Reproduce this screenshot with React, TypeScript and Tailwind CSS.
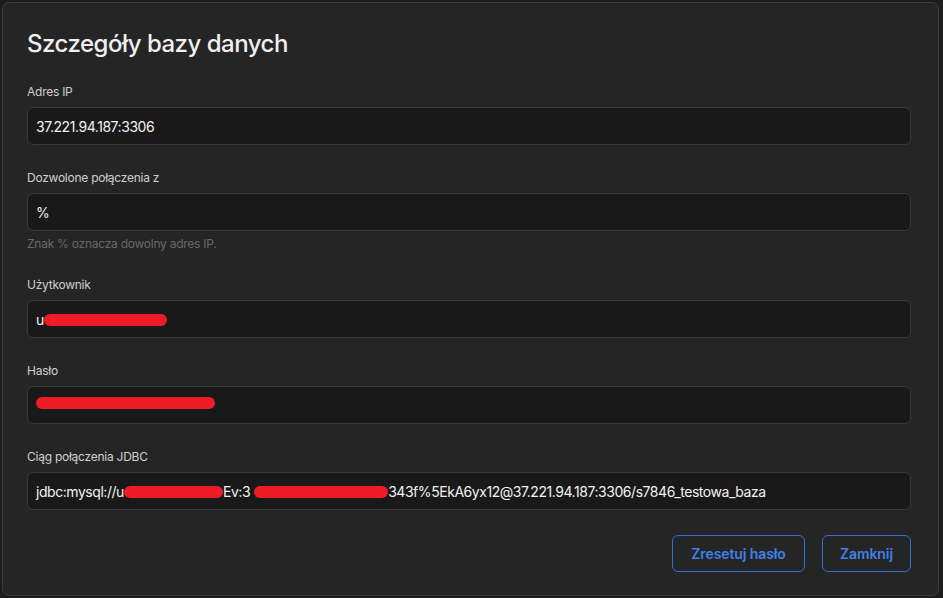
import React from "react";

function Redact({ width, className = "align-[-1px]" }: { width: number; className?: string }) {
  return (
    <span
      className={`inline-block h-[12px] rounded-full bg-[#ee1c25] ${className}`}
      style={{ width }}
    />
  );
}

function Field({
  label,
  hint,
  children,
}: {
  label: string;
  hint?: string;
  children?: React.ReactNode;
}) {
  return (
    <div className="flex flex-col">
      <label className="text-[12px] leading-4 tracking-[-0.25px] text-[#cfcfcf]">{label}</label>
      <div className="mt-[7px] flex h-[38px] items-center rounded-[6px] border border-[#3a3a3a] bg-[#191919] px-[8px]">
        <span className="whitespace-nowrap text-[14px] tracking-[-0.45px] text-[#f2f2f2]">
          {children}
        </span>
      </div>
      {hint && (
        <p className="mt-[5px] text-[12px] leading-4 tracking-[-0.25px] text-[#686868]">{hint}</p>
      )}
    </div>
  );
}

export default function App() {
  return (
    <div
      className="min-h-screen bg-[#1d1d1d] p-[2px]"
      style={{ fontFamily: "Inter, 'Noto Sans', sans-serif" }}
    >
      <div className="flex h-[594px] w-[937px] flex-col rounded-[7px] border border-[#3a3a3a] bg-[#252525] pl-[24px] pr-[27px] pt-[25px]">
        <h2 className="text-[24px] font-medium leading-8 tracking-[-0.5px] text-[#f0f0f0]">
          Szczegóły bazy danych
        </h2>

        <div className="mt-[24px] flex flex-col gap-[25px]">
          <Field label="Adres IP">37.221.94.187:3306</Field>
          <Field label="Dozwolone połączenia z" hint="Znak % oznacza dowolny adres IP.">
            %
          </Field>
          <Field label="Użytkownik">
            u<Redact width={123} />
          </Field>
          <Field label="Hasło">
            <Redact width={179} className="align-[2px]" />
          </Field>
          <Field label="Ciąg połączenia JDBC">
            jdbc:mysql://u<Redact width={99} />
            Ev:3<Redact width={134} className="ml-[4px] align-[-1px]" />
            343f%5EkA6yx12@37.221.94.187:3306/s7846_testowa_baza
          </Field>
        </div>

        <div className="mt-[25px] flex justify-end gap-[17px]">
          <button className="h-[37px] w-[133px] rounded-[6px] border border-[#2f6fd6] text-[14px] font-semibold tracking-[-0.1px] text-[#3f82e6]">
            Zresetuj hasło
          </button>
          <button className="h-[37px] w-[89px] rounded-[6px] border border-[#2f6fd6] text-[14px] font-semibold tracking-[-0.1px] text-[#3f82e6]">
            Zamknij
          </button>
        </div>
      </div>
    </div>
  );
}
